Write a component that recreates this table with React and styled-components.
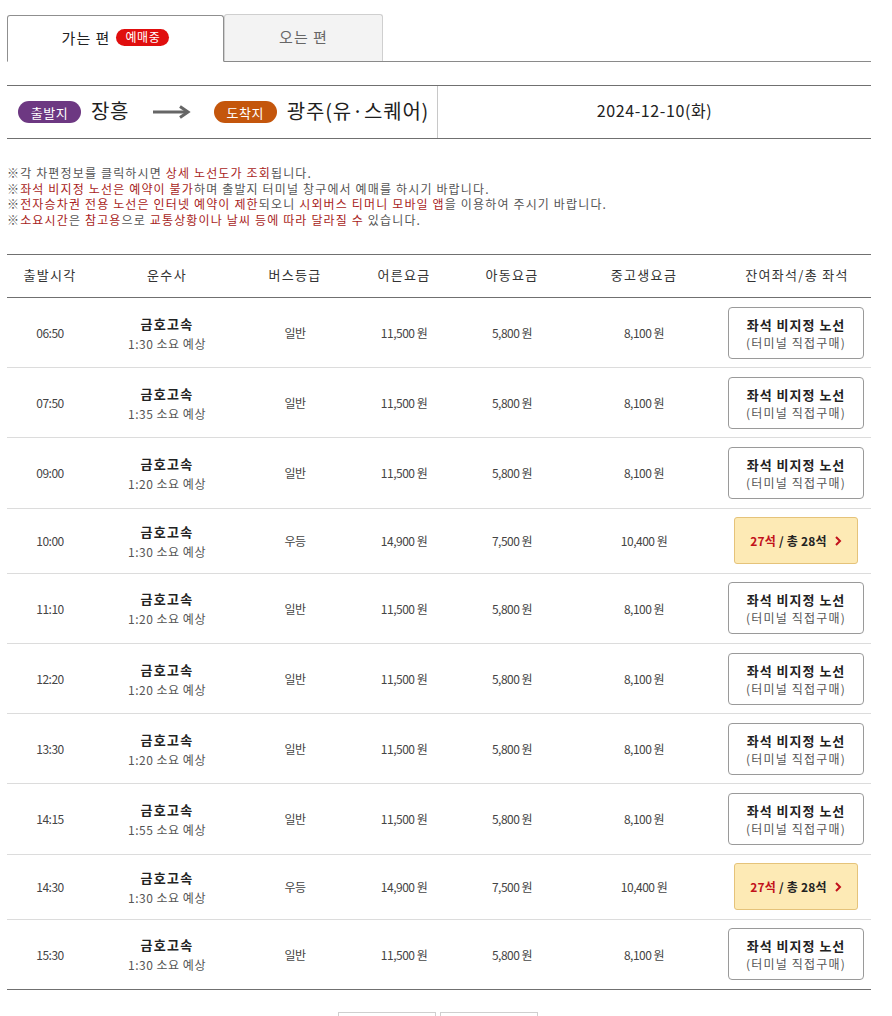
import React from "react";
import styled, { createGlobalStyle } from "styled-components";

const Global = createGlobalStyle`
  html, body { margin: 0; padding: 0; background: #fff; }
  body { font-family: "Noto Sans CJK KR", "Noto Sans", sans-serif; color: #333; }
  * { box-sizing: border-box; }
`;

const Page = styled.div`
  width: 864px;
  margin: 14px 0 0 7px;
`;

const TabBar = styled.div`
  display: flex;
  align-items: flex-end;
  height: 48px;
  border-bottom: 1px solid #8a8a8a;
`;

const Tab = styled.div`
  display: flex;
  align-items: center;
  justify-content: center;
  gap: 6px;
  width: ${(p) => p.$w}px;
  height: 47px;
  margin-bottom: ${(p) => (p.$active ? "-1px" : "0")};
  border: 1px solid ${(p) => (p.$active ? "#8f8f8f" : "#cfcfcf")};
  border-bottom: ${(p) => (p.$active ? "1px solid #fff" : "none")};
  border-radius: 3px 3px 0 0;
  background: ${(p) => (p.$active ? "#fff" : "#f3f3f3")};
  color: ${(p) => (p.$active ? "#222" : "#666")};
  font-size: 15px;
  letter-spacing: 1px;
  padding-bottom: 3px;
`;

const SaleBadge = styled.span`
  display: inline-flex;
  align-items: center;
  justify-content: center;
  width: 53px;
  height: 17px;
  border-radius: 9px;
  background: #e00e0e;
  color: #fff;
  font-size: 12px;
  letter-spacing: 0.5px;
  line-height: 1;
`;

const RouteBar = styled.div`
  display: grid;
  grid-template-columns: 431px 1fr;
  margin-top: 23px;
  height: 54px;
  border-top: 1px solid #707070;
  border-bottom: 1px solid #707070;
`;

const RouteCell = styled.div`
  display: flex;
  align-items: center;
  padding-left: 11px;
  border-right: 1px solid #c8c8c8;
`;

const DateCell = styled.div`
  display: flex;
  align-items: center;
  justify-content: center;
  font-size: 16px;
  letter-spacing: 0.6px;
  color: #222;
  padding-bottom: 4px;
`;

const PlaceBadge = styled.span`
  display: inline-flex;
  align-items: center;
  justify-content: center;
  width: 63px;
  height: 22px;
  border-radius: 11px;
  background: ${(p) => p.$bg};
  color: #fff;
  font-size: 13px;
  letter-spacing: 0.5px;
  margin-right: 10px;
`;

const PlaceName = styled.span`
  font-size: 20px;
  letter-spacing: ${(p) => p.$ls || 0}px;
  color: #1e1e1e;
  padding-bottom: 3px;
`;

const ArrowWrap = styled.span`
  display: inline-flex;
  margin: 0 23px 0 24px;
`;

const Notes = styled.div`
  margin-top: 26px;
  font-size: 12px;
  line-height: 15.5px;
  color: #555;
  letter-spacing: 1.15px;
`;

const Hl = styled.span`
  color: #a81d22;
`;

const Table = styled.table`
  width: 864px;
  margin-top: 27px;
  border-collapse: collapse;
  table-layout: fixed;
  border-top: 1px solid #707070;
  border-bottom: 1px solid #707070;
`;

const Th = styled.th`
  height: 43px;
  font-weight: normal;
  font-size: 13px;
  letter-spacing: 1.3px;
  color: #333;
  border-bottom: 1px solid #707070;
  padding: 0 0 3px;
`;

const Tr = styled.tr`
  & + & td { border-top: 1px solid #dcdcdc; }
`;

const Td = styled.td`
  text-align: center;
  font-size: 12px;
  color: #444;
  padding: 8.6px 0;
  letter-spacing: -0.5px;
`;

const Company = styled.div`
  font-weight: bold;
  font-size: 13px;
  color: #222;
  letter-spacing: 1.3px;
`;

const Duration = styled.div`
  margin-top: 2px;
  font-size: 12px;
  color: #555;
  letter-spacing: 0.5px;
`;

const SeatBtn = styled.div`
  display: flex;
  flex-direction: column;
  justify-content: center;
  align-items: center;
  width: 136px;
  height: 52px;
  margin: 0 7px 0 auto;
  border: 1px solid #9a9a9a;
  border-radius: 4px;
  background: #fff;
`;

const SeatTitle = styled.div`
  font-size: 13px;
  font-weight: bold;
  color: #222;
  letter-spacing: 1px;
`;

const SeatSub = styled.div`
  font-size: 12px;
  color: #555;
  letter-spacing: 1.2px;
`;

const BookBtn = styled.div`
  display: flex;
  align-items: center;
  justify-content: center;
  gap: 3px;
  width: 124px;
  height: 47px;
  margin: 0 13px 0 auto;
  border: 1px solid #e5c37a;
  border-radius: 3px;
  background: #fdeab5;
  font-size: 12px;
  font-weight: bold;
  color: #222;
  letter-spacing: 0.2px;
`;

const Red = styled.span`
  color: #c2121b;
`;

const Pager = styled.div`
  display: flex;
  justify-content: center;
  gap: 4px;
  margin-top: 22px;
  padding-right: 2px;
`;

const PagerBtn = styled.div`
  width: 98px;
  height: 30px;
  border: 1px solid #cfcfcf;
  background: #fff;
`;

const Arrow = () => (
  <svg width="38" height="14" viewBox="0 0 38 14">
    <line x1="0" y1="7" x2="34" y2="7" stroke="#666" strokeWidth="3" />
    <polyline points="27,1.5 35,7 27,12.5" fill="none" stroke="#666" strokeWidth="3" />
  </svg>
);

const Chevron = () => (
  <svg width="8" height="10" viewBox="0 0 8 10" style={{ marginLeft: 4 }}>
    <polyline points="2,1 6,5 2,9" fill="none" stroke="#c2121b" strokeWidth="2" />
  </svg>
);

const rows = [
  ["06:50", "1:30", "일반", "11,500", "5,800", "8,100", false],
  ["07:50", "1:35", "일반", "11,500", "5,800", "8,100", false],
  ["09:00", "1:20", "일반", "11,500", "5,800", "8,100", false],
  ["10:00", "1:30", "우등", "14,900", "7,500", "10,400", true],
  ["11:10", "1:20", "일반", "11,500", "5,800", "8,100", false],
  ["12:20", "1:20", "일반", "11,500", "5,800", "8,100", false],
  ["13:30", "1:20", "일반", "11,500", "5,800", "8,100", false],
  ["14:15", "1:55", "일반", "11,500", "5,800", "8,100", false],
  ["14:30", "1:30", "우등", "14,900", "7,500", "10,400", true],
  ["15:30", "1:30", "일반", "11,500", "5,800", "8,100", false],
];

const cols = [86, 148, 108, 110, 106, 158, 148];
const heads = ["출발시각", "운수사", "버스등급", "어른요금", "아동요금", "중고생요금", "잔여좌석/총 좌석"];

export default function App() {
  return (
    <>
      <Global />
      <Page>
        <TabBar>
          <Tab $active $w={217}>
            가는 편 <SaleBadge>예매중</SaleBadge>
          </Tab>
          <Tab $w={159}>오는 편</Tab>
        </TabBar>

        <RouteBar>
          <RouteCell>
            <PlaceBadge $bg="#6d3882">출발지</PlaceBadge>
            <PlaceName $ls={0.5}>장흥</PlaceName>
            <ArrowWrap><Arrow /></ArrowWrap>
            <PlaceBadge $bg="#c4560c">도착지</PlaceBadge>
            <PlaceName $ls={0.8}>광주(유·스퀘어)</PlaceName>
          </RouteCell>
          <DateCell>2024-12-10(화)</DateCell>
        </RouteBar>

        <Notes>
          <div>※각 차편정보를 클릭하시면 <Hl>상세 노선도가 조회</Hl>됩니다.</div>
          <div>※<Hl>좌석 비지정 노선은 예약이 불가</Hl>하며 출발지 터미널 창구에서 예매를 하시기 바랍니다.</div>
          <div>※<Hl>전자승차권 전용 노선은 인터넷 예약이 제한</Hl>되오니 <Hl>시외버스 티머니 모바일 앱</Hl>을 이용하여 주시기 바랍니다.</div>
          <div>※<Hl>소요시간</Hl>은 <Hl>참고용</Hl>으로 <Hl>교통상황이나 날씨 등에 따라 달라질 수</Hl> 있습니다.</div>
        </Notes>

        <Table>
          <colgroup>
            {cols.map((w, i) => <col key={i} style={{ width: w }} />)}
          </colgroup>
          <thead>
            <tr>{heads.map((h) => <Th key={h}>{h}</Th>)}</tr>
          </thead>
          <tbody>
            {rows.map(([t, d, g, a, c, s, book], i) => (
              <Tr key={i}>
                <Td>{t}</Td>
                <Td>
                  <Company>금호고속</Company>
                  <Duration>{d} 소요 예상</Duration>
                </Td>
                <Td>{g}</Td>
                <Td>{a} 원</Td>
                <Td>{c} 원</Td>
                <Td>{s} 원</Td>
                <Td>
                  {book ? (
                    <BookBtn>
                      <Red>27석</Red> / 총 28석 <Chevron />
                    </BookBtn>
                  ) : (
                    <SeatBtn>
                      <SeatTitle>좌석 비지정 노선</SeatTitle>
                      <SeatSub>(터미널 직접구매)</SeatSub>
                    </SeatBtn>
                  )}
                </Td>
              </Tr>
            ))}
          </tbody>
        </Table>

        <Pager>
          <PagerBtn />
          <PagerBtn />
        </Pager>
      </Page>
    </>
  );
}
